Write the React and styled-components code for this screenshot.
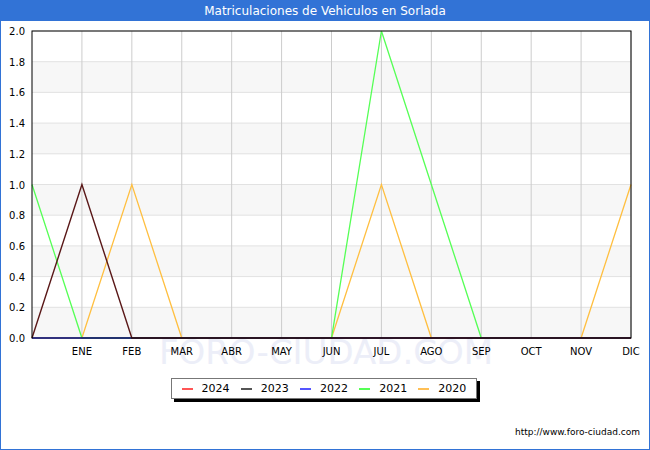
import React from "react";
import styled, { createGlobalStyle } from "styled-components";

const G = createGlobalStyle`
  body { margin:0; font-family: "DejaVu Sans", sans-serif; }
`;
const Frame = styled.div`
  width:650px; height:450px; box-sizing:border-box; border:1px solid #3273d6; border-top:none;
  display:flex; flex-direction:column; background:#fff; position:relative;
`;
const Title = styled.div`
  height:21px; background:#3273d6; color:#fff; font-size:12px; display:flex; align-items:center; justify-content:center; margin:0 -1px;
`;
const Legend = styled.div`
  position:absolute; left:170px; top:378px; width:306px; height:21px; border:1px solid #777;
  box-shadow:3px 3px 0 #000; background:#fff; display:flex; align-items:center; justify-content:space-around; font-size:11px; padding:0 4px; box-sizing:border-box;
`;
const Item = styled.span`
  display:flex; align-items:center; gap:9px;
  &::before { content:""; width:11px; height:2px; background:${p=>p.c}; }
`;
const Url = styled.div`
  position:absolute; right:9px; top:427px; font-size:9px; color:#000;
`;

const X0=31, W=599, Y0=31, H=307;
const x=i=>X0+i*W/12, y=v=>Y0+H-v*H/2;
const months=["ENE","FEB","MAR","ABR","MAY","JUN","JUL","AGO","SEP","OCT","NOV","DIC"];
const pts=a=>a.map(([i,v])=>`${x(i)},${y(v)}`).join(" ");

export default function App(){
  const bands=[];
  for(let k=0;k<10;k++) if(k%2===1) bands.push(<rect key={k} x={X0} y={Y0+k*H/10} width={W} height={H/10} fill="#f7f7f7"/>);
  return <Frame><G/><Title>Matriculaciones de Vehiculos en Sorlada</Title>
    <svg width="650" height="429" style={{position:"absolute",top:0,left:0}}>
      {bands}
      {Array.from({length:11},(_,k)=><line key={"h"+k} x1={X0} x2={X0+W} y1={Y0+k*H/10} y2={Y0+k*H/10} stroke="#e2e2e2"/>)}
      {Array.from({length:12},(_,k)=><line key={"v"+k} x1={x(k+1)} x2={x(k+1)} y1={Y0} y2={Y0+H} stroke="#cccccc"/>)}
      <text x="325" y="364" textAnchor="middle" fontSize="34" fill="#eceef8" fontFamily="DejaVu Sans">FORO-CIUDAD.COM</text>
      {Array.from({length:11},(_,k)=><text key={"t"+k} x="24" y={Y0+H-k*H/10+4} textAnchor="end" fontSize="10">{(k*0.2).toFixed(1)}</text>)}
      {months.map((m,k)=><text key={m} x={x(k+1)} y="355" textAnchor="middle" fontSize="10">{m}</text>)}
      <polyline fill="none" stroke="#ffbf40" strokeWidth="1.3" points={pts([[1,0],[2,1],[3,0],[6,0],[7,1],[8,0],[11,0],[12,1]])}/>
      <polyline fill="none" stroke="#55ff55" strokeWidth="1.3" points={pts([[0,1],[1,0],[6,0],[7,2],[8,1],[9,0],[12,0]])}/>
      <polyline fill="none" stroke="#3333ff" strokeWidth="1.3" points={pts([[0,0],[12,0]])}/>
      <polyline fill="none" stroke="#5a1818" strokeWidth="1.4" points={pts([[0,0],[1,1],[2,0],[12,0]])}/>
      <rect x={X0} y={Y0} width={W} height={H} fill="none" stroke="#000"/>
    </svg>
    <Legend>
      <Item c="#ff5555">2024</Item><Item c="#555555">2023</Item><Item c="#5555ff">2022</Item><Item c="#55ff55">2021</Item><Item c="#ffbf55">2020</Item>
    </Legend>
    <Url>http://www.foro-ciudad.com</Url>
  </Frame>;
}
